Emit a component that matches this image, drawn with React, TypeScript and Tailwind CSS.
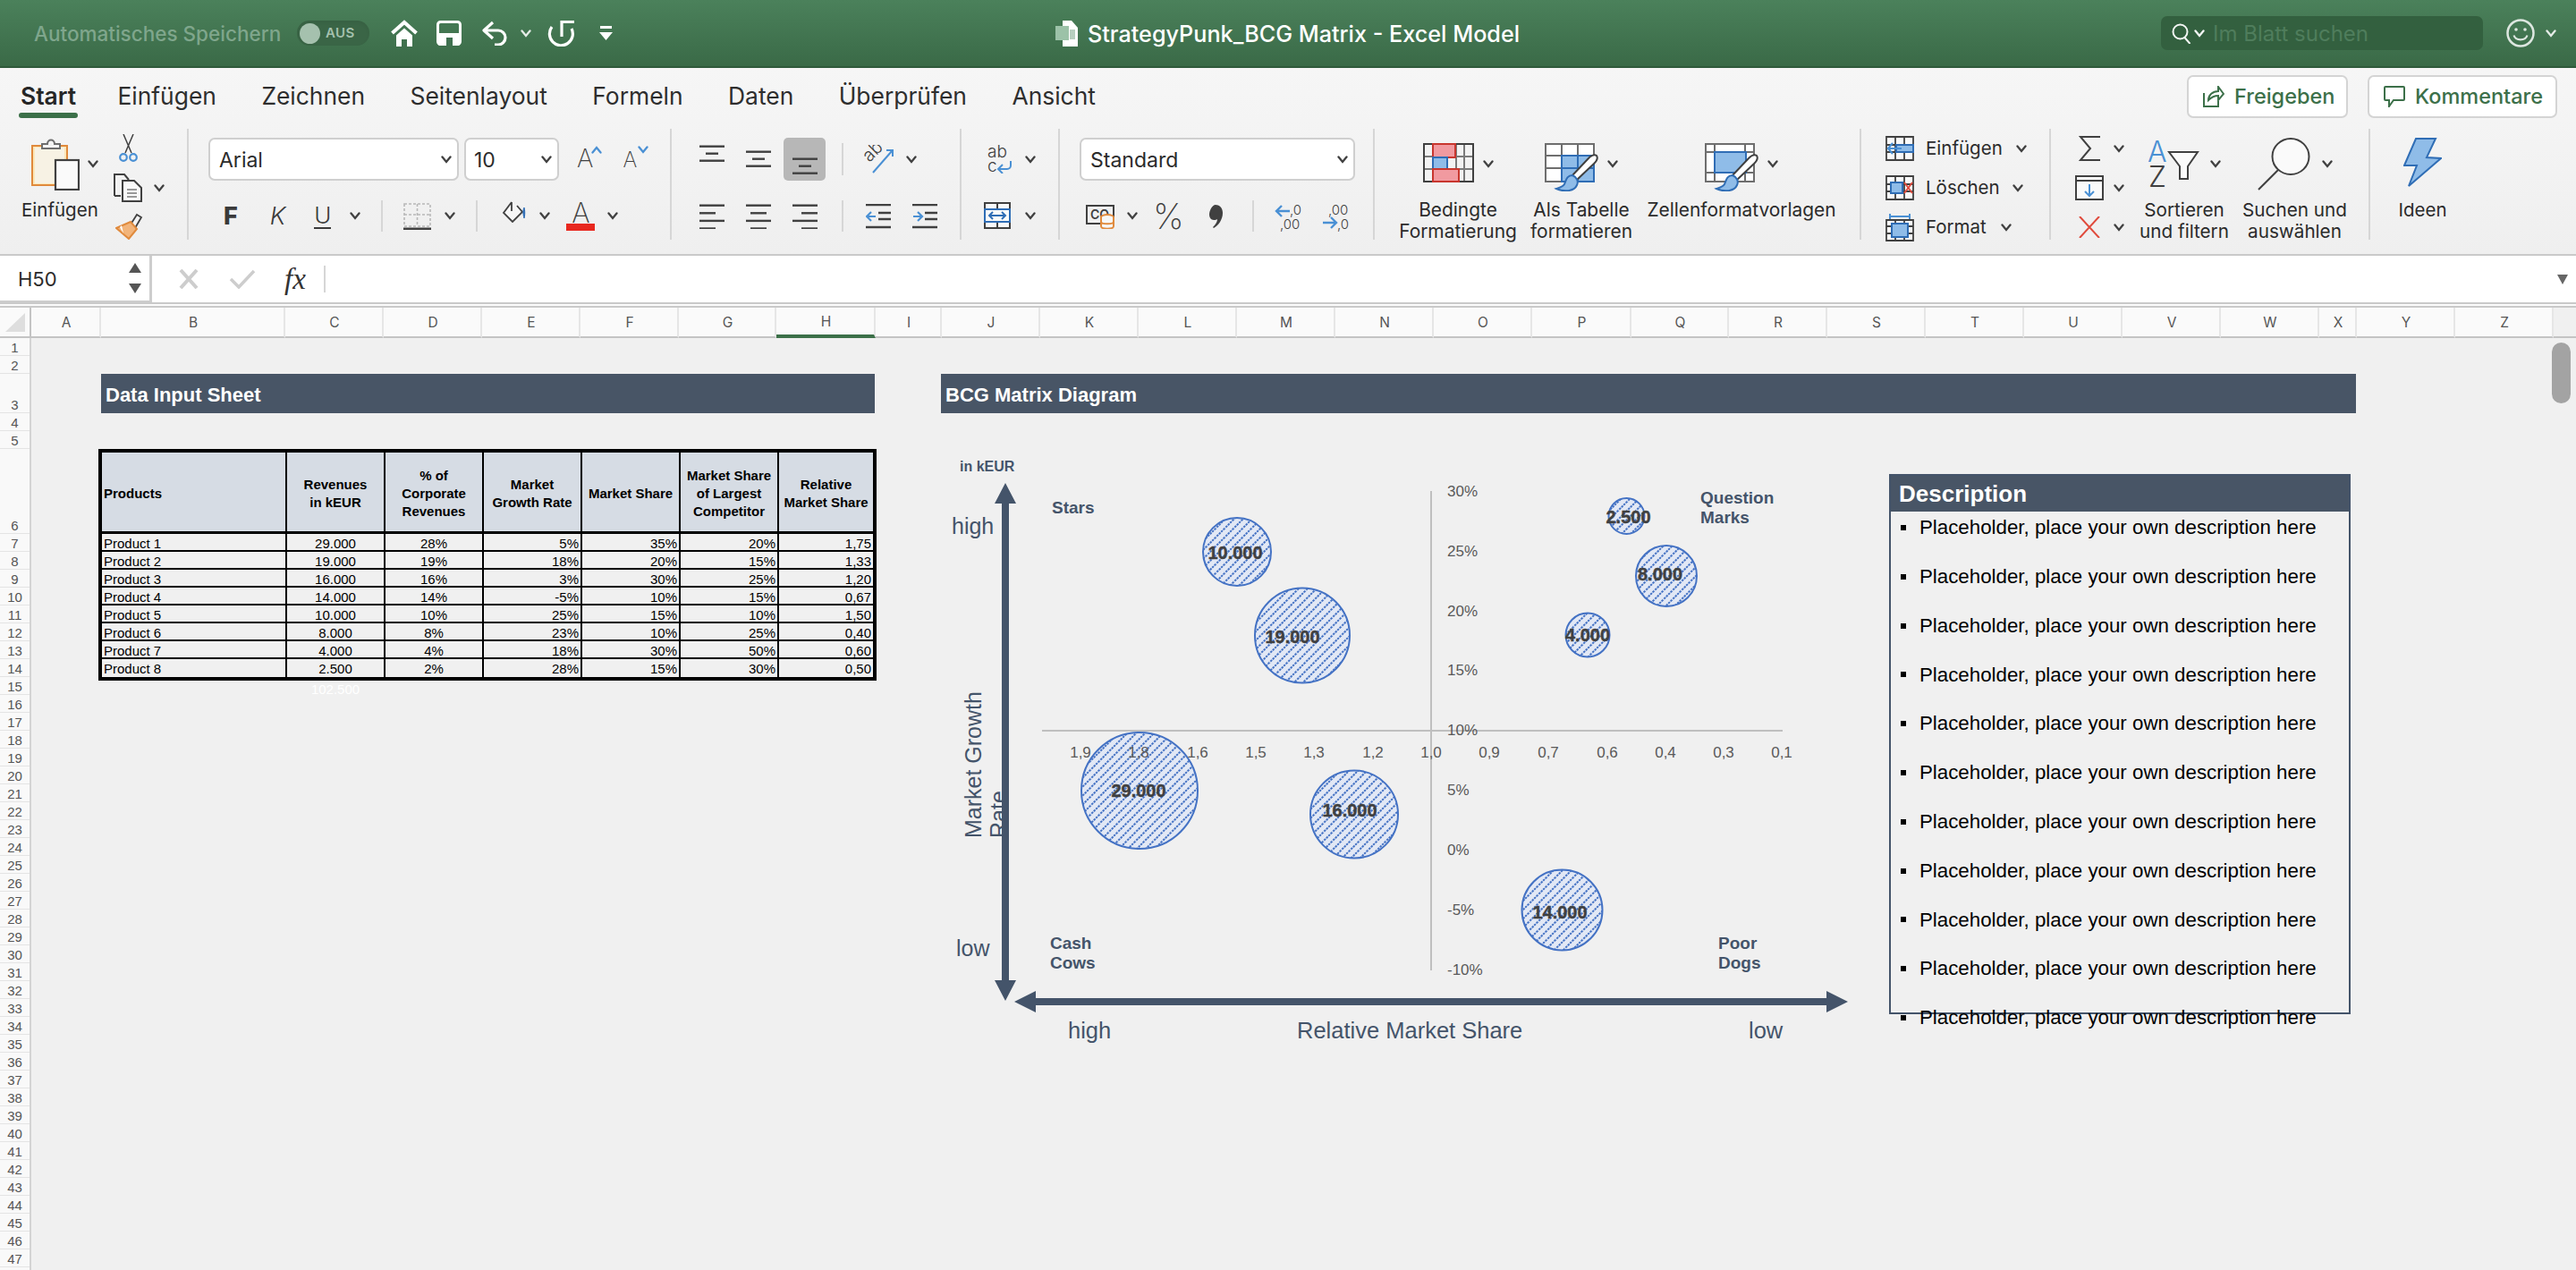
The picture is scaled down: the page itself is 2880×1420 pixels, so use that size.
const UI = "font-['Inter','Liberation_Sans',sans-serif]"

const COLUMNS = [
  { n: 'A', w: 'w-[78px]' }, { n: 'B', w: 'w-[206px]' }, { n: 'C', w: 'w-[110px]' }, { n: 'D', w: 'w-[110px]' },
  { n: 'E', w: 'w-[110px]' }, { n: 'F', w: 'w-[110px]' }, { n: 'G', w: 'w-[109px]' }, { n: 'H', w: 'w-[111px]' },
  { n: 'I', w: 'w-[74px]' }, { n: 'J', w: 'w-[110px]' }, { n: 'K', w: 'w-[110px]' }, { n: 'L', w: 'w-[110px]' },
  { n: 'M', w: 'w-[110px]' }, { n: 'N', w: 'w-[110px]' }, { n: 'O', w: 'w-[110px]' }, { n: 'P', w: 'w-[111px]' },
  { n: 'Q', w: 'w-[109px]' }, { n: 'R', w: 'w-[110px]' }, { n: 'S', w: 'w-[110px]' }, { n: 'T', w: 'w-[110px]' },
  { n: 'U', w: 'w-[110px]' }, { n: 'V', w: 'w-[110px]' }, { n: 'W', w: 'w-[110px]' }, { n: 'X', w: 'w-[42px]' },
  { n: 'Y', w: 'w-[110px]' }, { n: 'Z', w: 'w-[110px]' },
]

const ROWS = Array.from({ length: 47 }, (_, i) => i + 1)

const PRODUCTS = [
  ['Product 1', '29.000', '28%', '5%', '35%', '20%', '1,75'],
  ['Product 2', '19.000', '19%', '18%', '20%', '15%', '1,33'],
  ['Product 3', '16.000', '16%', '3%', '30%', '25%', '1,20'],
  ['Product 4', '14.000', '14%', '-5%', '10%', '15%', '0,67'],
  ['Product 5', '10.000', '10%', '25%', '15%', '10%', '1,50'],
  ['Product 6', '8.000', '8%', '23%', '10%', '25%', '0,40'],
  ['Product 7', '4.000', '4%', '18%', '30%', '50%', '0,60'],
  ['Product 8', '2.500', '2%', '28%', '15%', '30%', '0,50'],
]

const BUBBLES = [
  { cx: 1383, cy: 617, r: 38, tx: 1381, ty: 618, label: '10.000' },
  { cx: 1456, cy: 710.5, r: 53, tx: 1445, ty: 712, label: '19.000' },
  { cx: 1274, cy: 884, r: 65, tx: 1273, ty: 884, label: '29.000' },
  { cx: 1514, cy: 910.5, r: 49, tx: 1509, ty: 906, label: '16.000' },
  { cx: 1746.5, cy: 1017.5, r: 45, tx: 1744, ty: 1020, label: '14.000' },
  { cx: 1818.5, cy: 577, r: 20, tx: 1820.5, ty: 578, label: '2.500' },
  { cx: 1863, cy: 644, r: 34, tx: 1856, ty: 642, label: '8.000' },
  { cx: 1775, cy: 710, r: 24.5, tx: 1775, ty: 710, label: '4.000' },
]

const Y_TICKS = [
  ['30%', 549], ['25%', 616], ['20%', 683], ['15%', 749], ['10%', 816],
  ['5%', 883], ['0%', 950], ['-5%', 1017], ['-10%', 1084],
] as const

const X_TICKS = [
  ['1,9', 1208], ['1,8', 1273], ['1,6', 1339], ['1,5', 1404], ['1,3', 1469], ['1,2', 1535], ['1,0', 1600],
  ['0,9', 1665], ['0,7', 1731], ['0,6', 1797], ['0,4', 1862], ['0,3', 1927], ['0,1', 1992],
] as const

const TABS = ['Einfügen', 'Zeichnen', 'Seitenlayout', 'Formeln', 'Daten', 'Überprüfen', 'Ansicht']

function Chev({ className = '', color = '#404040' }: { className?: string; color?: string }) {
  return (
    <svg width="12" height="9" viewBox="0 0 12 9" className={`shrink-0 ${className}`}>
      <path d="M1.5 1.5 6 7l4.5-5.5" fill="none" stroke={color} strokeWidth="2.3" strokeLinecap="round" />
    </svg>
  )
}

function Sep({ className = '' }: { className?: string }) {
  return <div className={`w-[2px] bg-[#d6d6d6] shrink-0 ${className}`} />
}

function SelectBox({ w, label, textMl, className = '' }: { w: string; label: string; textMl: string; className?: string }) {
  return (
    <div className={`${w} ${className} h-[48px] bg-white border-2 border-[#cfcfcf] rounded-[7px] flex items-center shrink-0`}>
      <span className={`${textMl} pt-[2px] text-[23px] text-[#2b2b2b] leading-none`}>{label}</span>
      <Chev className="ml-auto mr-[6px]" />
    </div>
  )
}

function AlignIcon({ rows, className = '' }: { rows: [number, number][]; className?: string }) {
  const step = rows.length === 3 ? 8 : 8.6
  return (
    <svg width="28" height={rows.length === 4 ? 28 : 20} className={`shrink-0 ${className}`}>
      {rows.map(([a, b], i) => (
        <rect key={i} x={a} y={i * step + 0.5} width={b - a} height="2.4" fill="#404040" />
      ))}
    </svg>
  )
}

function BrushOverlay() {
  return (
    <g>
      <path d="M58 14 C55 12 52 14 49 17 L31 36 L36 41 L55 23 C58 20 60 17 58 14Z" fill="#fff" stroke="#404040" strokeWidth="2" />
      <path d="M31 36 C25 36 24 41 22 46 C20 49 16 50 13 51 C22 55 33 54 36 47 C38 43 36 38 31 36Z" fill="#8fbce8" stroke="#2f6db5" strokeWidth="2" />
    </g>
  )
}

function TitleBar() {
  return (
    <div className="h-[76px] bg-gradient-to-b from-[#4b815b] to-[#3a6a47] border-b-2 border-[#2f5a3b] flex items-center">
      <span className="ml-[38px] pt-[2px] w-[280px] text-[22.5px] font-medium text-[#7fa68c] whitespace-nowrap">Automatisches Speichern</span>
      <div className="ml-[14px] w-[81px] h-[28px] rounded-full bg-[#3a6546] flex items-center shadow-inner">
        <div className="ml-[3px] w-[23px] h-[23px] rounded-full bg-[#a5c1ae]" />
        <span className="ml-[6px] text-[15px] font-semibold text-[#a5c1ae] tracking-wide">AUS</span>
      </div>
      <svg width="32" height="30" viewBox="0 0 32 30" className="ml-[23px]">
        <path d="M2.5 15 16 3l13.500 12" fill="none" stroke="#fff" strokeWidth="4" />
        <path d="M7 17.500 16 9.500l9 8V30h-6v-8h-6v8H7Z" fill="#fff" />
      </svg>
      <svg width="28" height="28" viewBox="0 0 28 28" className="ml-[20px]">
        <rect x="1.500" y="1.500" width="25" height="25" rx="3" fill="none" stroke="#fff" strokeWidth="3" />
        <path d="M2 14h24v12a2 2 0 0 1-2 2H4a2 2 0 0 1-2-2Z" fill="#fff" />
        <rect x="11" y="19" width="7" height="9" fill="#3f7150" />
      </svg>
      <svg width="30" height="28" viewBox="0 0 30 28" className="ml-[22px]">
        <path d="M13 2 3 11l10 9M3 11h16a8 8 0 0 1 0 16h-4" fill="none" stroke="#fff" strokeWidth="3.200" strokeLinejoin="round" />
      </svg>
      <Chev className="ml-[14px]" color="#e5ece7" />
      <svg width="32" height="30" viewBox="0 0 32 30" className="ml-[17px]">
        <path d="M6 8a13 13 0 1 0 22 2" fill="none" stroke="#fff" strokeWidth="3.200" />
        <path d="M17 19V2.500h14" fill="none" stroke="#fff" strokeWidth="3.200" />
      </svg>
      <svg width="15" height="16" viewBox="0 0 15 16" className="ml-[27px]">
        <rect x="1" y="0" width="13" height="3" fill="#fff" />
        <path d="M0 7h15l-7.500 9Z" fill="#fff" />
      </svg>

      <svg width="25" height="29" viewBox="0 0 25 29" className="ml-[495px]">
        <path d="M8 0h10l7 8v21H8Z" fill="#fff" />
        <rect x="0" y="6" width="15" height="16" fill="#9cc2a8" />
        <rect x="16" y="10" width="6" height="11" fill="#b7cfbf" />
      </svg>
      <span className="ml-[11px] pt-[3px] text-[25.200px] font-medium text-white whitespace-nowrap w-[486px]">StrategyPunk_BCG Matrix - Excel Model</span>

      <div className="ml-[714px] w-[360px] h-[38px] rounded-[7px] bg-[#33603f] flex items-center">
        <svg width="22" height="23" viewBox="0 0 22 23" className="ml-[12px]">
          <circle cx="9.500" cy="9.500" r="8" fill="none" stroke="#f2f5f3" strokeWidth="2" />
          <path d="m14.500 16 6 7" stroke="#f2f5f3" strokeWidth="2" />
        </svg>
        <Chev className="ml-[3px]" color="#f2f5f3" />
        <span className="ml-[9px] pt-[2px] text-[24px] text-[#4f7d5c] whitespace-nowrap">Im Blatt suchen</span>
      </div>
      <svg width="32" height="32" viewBox="0 0 32 32" className="ml-[26px]">
        <circle cx="16" cy="16" r="14.500" fill="none" stroke="#dde7e0" strokeWidth="2.500" />
        <circle cx="11" cy="12" r="1.800" fill="#dde7e0" />
        <circle cx="21" cy="12" r="1.800" fill="#dde7e0" />
        <path d="M8.500 18.500c2 6.500 13 6.500 15 0" fill="none" stroke="#dde7e0" strokeWidth="2.200" />
      </svg>
      <Chev className="ml-[12px]" color="#e5ece7" />
    </div>
  )
}

function Tabs() {
  return (
    <div className="h-[68px] flex justify-between">
      <div className="flex pl-[21px] pt-[15px] gap-[50.500px]">
        <div className="flex flex-col items-center mr-[-6px]">
          <span className="text-[26.400px] leading-[32px] font-semibold text-[#262626]">Start</span>
          <div className="mt-[3px] w-[66px] h-[6px] rounded-full bg-[#3c7049]" />
        </div>
        {TABS.map((t) => (
          <span key={t} className="text-[26.400px] leading-[32px] text-[#2e2e2e]">{t}</span>
        ))}
      </div>
      <div className="flex pt-[8px] pr-[21px] gap-[22px]">
        <div className="w-[180px] h-[48px] bg-white border-2 border-[#d4d4d4] rounded-[7px] flex items-center">
          <svg width="24" height="24" viewBox="0 0 24 24" className="ml-[16px]">
            <path d="M1 8v15h16v-6M6 16c0-6 5-10 11-10V1l6 8-6 7v-5c-5 0-8 2-11 5Z" fill="none" stroke="#3c7049" strokeWidth="2" />
          </svg>
          <span className="ml-[11px] text-[23.500px] font-medium text-[#3c7049]">Freigeben</span>
        </div>
        <div className="w-[212px] h-[48px] bg-white border-2 border-[#d4d4d4] rounded-[7px] flex items-center">
          <svg width="24" height="24" viewBox="0 0 24 24" className="ml-[16px]">
            <path d="M2 1h20a1 1 0 0 1 1 1v13a1 1 0 0 1-1 1H11l-5 7v-7H2a1 1 0 0 1-1-1V2a1 1 0 0 1 1-1Z" fill="none" stroke="#3c7049" strokeWidth="2" />
          </svg>
          <span className="ml-[11px] text-[23.500px] font-medium text-[#3c7049]">Kommentare</span>
        </div>
      </div>
    </div>
  )
}

function PasteGroup() {
  return (
    <div className="w-[211px] h-[124px] border-r-2 border-[#d6d6d6] flex shrink-0">
      <div className="w-[127px] pl-[24px] pt-[10px] flex flex-col">
        <div className="flex items-center pl-[11px] h-[59px] shrink-0">
          <svg width="54" height="59" viewBox="0 0 54 59">
            <rect x="1" y="9" width="39" height="44" fill="#fbe7b8" stroke="#e08a3c" strokeWidth="2" />
            <rect x="4" y="11" width="33" height="40" fill="#f7f2e4" />
            <path d="M12 12V7h6c0-6 8-6 8 0h6v5Z" fill="#f4f4f4" stroke="#6e6e6e" strokeWidth="2" />
            <rect x="27" y="25" width="26" height="33" fill="#fafafa" stroke="#404040" strokeWidth="2.200" />
          </svg>
          <Chev className="ml-[9px]" />
        </div>
        <span className="mt-[10px] text-[20.500px] leading-[24px] text-[#2b2b2b] whitespace-nowrap">Einfügen</span>
      </div>
      <div className="flex flex-col pt-[6px]">
        <svg width="21" height="32" viewBox="0 0 21 32" className="ml-[6px] shrink-0">
          <path d="M5 0 14 21M16 0 7 21" stroke="#404040" strokeWidth="1.500" fill="none" />
          <circle cx="5" cy="26" r="3.800" fill="none" stroke="#4a90d4" strokeWidth="2.200" />
          <circle cx="16" cy="26" r="3.800" fill="none" stroke="#4a90d4" strokeWidth="2.200" />
        </svg>
        <div className="flex items-center mt-[12px]">
          <svg width="33" height="32" viewBox="0 0 33 32">
            <path d="M1 25V1h11l5 6" fill="none" stroke="#404040" strokeWidth="2" />
            <path d="M1 25h7" stroke="#404040" strokeWidth="2" />
            <path d="M10 8h13l8 8v15H10Z" fill="#fafafa" stroke="#404040" strokeWidth="2" />
            <path d="M15 18h11M15 22h11M15 26h11" stroke="#7a7a7a" strokeWidth="1.500" />
          </svg>
          <Chev className="ml-[12px]" />
        </div>
        <svg width="31" height="30" viewBox="0 0 31 30" className="mt-[12px] ml-[2px] shrink-0">
          <path d="M17 13 24 2l5 3-7 12" fill="#f4f4f4" stroke="#404040" strokeWidth="1.800" />
          <path d="M1 17 17 10l7 8-9 11Z" fill="#f2b47a" stroke="#e08a3c" strokeWidth="2" />
          <path d="M5 16l4 7-2-9" fill="#fff" />
        </svg>
      </div>
    </div>
  )
}

function FontGroup() {
  return (
    <div className="w-[540px] h-[124px] border-r-2 border-[#d6d6d6] flex flex-col shrink-0">
      <div className="flex mt-[10px] h-[48px] ml-[22px]">
        <SelectBox w="w-[280px]" label="Arial" textMl="ml-[10px]" />
        <SelectBox w="w-[106px]" className="ml-[6px]" label="10" textMl="ml-[9px]" />
        <div className="ml-[20px] mt-[9px] flex">
          <span className="text-[28px] font-extralight leading-[28px] text-[#404040]">A</span>
          <Chev className="ml-[-2px] rotate-180" color="#4a90d4" />
          <span className="ml-[23px] mt-[4px] text-[24px] font-extralight leading-[24px] text-[#404040]">A</span>
          <Chev className="ml-[1px]" color="#4a90d4" />
        </div>
      </div>
      <div className="flex items-center mt-[22px] h-[35px] ml-[39px]">
        <span className="text-[27px] font-extrabold leading-none text-[#3a3a3a]">F</span>
        <span className="ml-[36px] text-[27px] italic font-light leading-none text-[#3a3a3a]">K</span>
        <span className="ml-[32px] text-[26px] font-light leading-[26px] border-b-2 border-[#3a3a3a] text-[#3a3a3a]">U</span>
        <Chev className="ml-[21px]" />
        <Sep className="ml-[23px] h-[35px]" />
        <svg width="31" height="30" viewBox="0 0 31 30" className="ml-[23px] shrink-0">
          <path d="M1 1h29v25H1ZM15.500 1v25M1 13h29" fill="none" stroke="#b8b8b8" strokeWidth="1.600" strokeDasharray="3 2" />
          <rect x="0" y="27.500" width="31" height="2.500" fill="#404040" />
        </svg>
        <Chev className="ml-[15px]" />
        <Sep className="ml-[23px] h-[35px]" />
        <svg width="27" height="24" viewBox="0 0 27 24" className="ml-[27px] mb-[9px] shrink-0">
          <path d="M11 1 2 13l10 10 11-11-6-7M11 1v10" fill="#f7f7f7" stroke="#404040" strokeWidth="1.800" />
          <path d="M25 7c1 4 1 8 0 12-1-4-2-8 0-12Z" fill="#2f6db5" stroke="#2f6db5" />
        </svg>
        <Chev className="ml-[15px]" />
        <div className="ml-[18px] w-[32px] flex flex-col items-center">
          <span className="text-[31px] font-extralight leading-[25px] text-[#404040]">A</span>
          <div className="w-[32px] h-[8px] bg-[#e8281f]" />
        </div>
        <Chev className="ml-[14px]" />
      </div>
    </div>
  )
}

function AlignGroup() {
  return (
    <div className="w-[324px] h-[124px] border-r-2 border-[#d6d6d6] flex flex-col shrink-0">
      <div className="flex mt-[10px] h-[48px] ml-[31px]">
        <AlignIcon className="mt-[8px]" rows={[[0, 28], [7, 21], [0, 28]]} />
        <AlignIcon className="ml-[24px] mt-[14px]" rows={[[0, 28], [7, 21], [0, 28]]} />
        <div className="ml-[14px] w-[47px] h-[48px] bg-[#b7b7b7] rounded-[5px] shrink-0 flex justify-center pt-[22px]">
          <AlignIcon rows={[[0, 28], [7, 21], [0, 28]]} />
        </div>
        <Sep className="ml-[18px] mt-[6px] h-[36px]" />
        <svg width="33" height="32" viewBox="0 0 33 32" className="ml-[23px] mt-[8px] shrink-0">
          <text x="6" y="20" transform="rotate(-45 6 20)" fontSize="20" fill="#404040" fontWeight="300">ab</text>
          <path d="M10 31 31 7M25 6h7v7" fill="none" stroke="#4a90d4" strokeWidth="2" />
        </svg>
        <Chev className="ml-[14px] mt-[20px]" />
      </div>
      <div className="flex mt-[26px] h-[30px] ml-[31px]">
        <AlignIcon rows={[[0, 28], [0, 18], [0, 28], [0, 18]]} />
        <AlignIcon className="ml-[24px]" rows={[[0, 28], [5, 23], [0, 28], [5, 23]]} />
        <AlignIcon className="ml-[24px]" rows={[[0, 28], [10, 28], [0, 28], [10, 28]]} />
        <Sep className="ml-[27px] mt-[-4px] h-[35px]" />
        <svg width="28" height="28" viewBox="0 0 28 28" className="ml-[25px] shrink-0">
          <path d="M0 1h28M14 10h14M14 17h14M0 26h28" stroke="#404040" strokeWidth="2.400" />
          <path d="M11 14H1M6 9l-5 5 5 5" fill="none" stroke="#4a90d4" strokeWidth="2.200" />
        </svg>
        <svg width="28" height="28" viewBox="0 0 28 28" className="ml-[24px] shrink-0">
          <path d="M0 1h28M14 10h14M14 17h14M0 26h28" stroke="#404040" strokeWidth="2.400" />
          <path d="M1 14h10M6 9l5 5-5 5" fill="none" stroke="#4a90d4" strokeWidth="2.200" />
        </svg>
      </div>
    </div>
  )
}

function WrapGroup() {
  return (
    <div className="w-[110px] h-[124px] border-r-2 border-[#d6d6d6] flex flex-col shrink-0">
      <div className="flex items-center ml-[29px] mt-[18px] h-[32px]">
        <svg width="30" height="32" viewBox="0 0 30 32">
          <text x="0" y="14" fontSize="19" fill="#404040" fontWeight="300">ab</text>
          <text x="0" y="30" fontSize="19" fill="#404040" fontWeight="300">c</text>
          <path d="M26 18v5a4 4 0 0 1-4 4H12M17 22l-5 5 5 5" fill="none" stroke="#4a90d4" strokeWidth="2" />
        </svg>
        <Chev className="ml-[12px]" />
      </div>
      <div className="flex items-center ml-[25px] mt-[32px] h-[30px]">
        <svg width="30" height="30" viewBox="0 0 30 30">
          <path d="M1 1h28v28H1ZM15 1v6M15 23v6" fill="#fafafa" stroke="#404040" strokeWidth="2" />
          <rect x="1" y="8" width="28" height="14" fill="#fafafa" stroke="#2f6db5" strokeWidth="2" />
          <path d="M6 15h18M10 11l-4 4 4 4M20 11l4 4-4 4" fill="none" stroke="#2f6db5" strokeWidth="2" />
        </svg>
        <Chev className="ml-[16px]" />
      </div>
    </div>
  )
}

function NumberGroup() {
  return (
    <div className="w-[352px] h-[124px] border-r-2 border-[#d6d6d6] flex flex-col shrink-0">
      <div className="mt-[10px] ml-[22px]">
        <SelectBox w="w-[308px]" label="Standard" textMl="ml-[10px]" />
      </div>
      <div className="flex items-center mt-[22px] h-[35px] ml-[29px]">
        <svg width="33" height="28" viewBox="0 0 33 28" className="shrink-0">
          <path d="M1 2h30v20H1Z" fill="none" stroke="#404040" strokeWidth="2" />
          <text x="5" y="17" fontSize="14" fontWeight="600" fill="#404040">CO</text>
          <ellipse cx="24" cy="15" rx="7" ry="3" fill="#f7f7f7" stroke="#e08a3c" strokeWidth="2" />
          <path d="M17 15v10c0 3.500 14 3.500 14 0V15M17 20c0 3 14 3 14 0" fill="#f7f7f7" stroke="#e08a3c" strokeWidth="2" />
        </svg>
        <Chev className="ml-[13px]" />
        <span className="ml-[17px] text-[39px] font-extralight leading-none text-[#404040]">%</span>
        <svg width="16" height="28" viewBox="0 0 16 28" className="ml-[28px] shrink-0">
          <path d="M7 1c4 0 8 3 8 9 0 8-5 14-10 17l-1-1c3-3 5-6 5-9-1 .6-2 1-4 1-3 0-5-3-5-6 0-4 3-11 7-11Z" fill="#404040" />
        </svg>
        <Sep className="ml-[32px] h-[35px]" />
        <svg width="32" height="30" viewBox="0 0 32 30" className="ml-[23px] shrink-0 overflow-visible">
          <path d="M17 9H2M8 3 2 9l6 6" fill="none" stroke="#4a90d4" strokeWidth="2.400" />
          <text x="17" y="13" fontSize="15" fontWeight="300" fill="#404040">,0</text>
          <text x="6" y="29" fontSize="15" fontWeight="300" fill="#404040">,00</text>
        </svg>
        <svg width="32" height="30" viewBox="0 0 32 30" className="ml-[21px] shrink-0 overflow-visible">
          <text x="7" y="13" fontSize="15" fontWeight="300" fill="#404040">,00</text>
          <path d="M1 22h15M10 16l6 6-6 6" fill="none" stroke="#4a90d4" strokeWidth="2.400" />
          <text x="17" y="29" fontSize="15" fontWeight="300" fill="#404040">,0</text>
        </svg>
      </div>
    </div>
  )
}

function StyleColumn({ icon, lines, className, w }: { icon: React.ReactNode; lines: string[]; className: string; w: string }) {
  return (
    <div className={`${className} ${w} flex flex-col items-center shrink-0`}>
      <div className="h-[54px] flex items-start mt-[16px] shrink-0">
        {icon}
        <Chev className="mt-[19px] ml-[10px]" />
      </div>
      <div className="mt-[9px] text-center text-[20.900px] leading-[24px] text-[#2b2b2b] whitespace-nowrap">
        {lines.map((l) => <div key={l}>{l}</div>)}
      </div>
    </div>
  )
}

function StylesGroup() {
  return (
    <div className="w-[544px] h-[124px] border-r-2 border-[#d6d6d6] flex shrink-0">
      <StyleColumn
        className="ml-[24px]" w="w-[138px]" lines={['Bedingte', 'Formatierung']}
        icon={
          <svg width="57" height="54" viewBox="0 0 57 54">
            <path d="M37 1v42M46 1v42M1 15h55M1 29h55" stroke="#7a7a7a" strokeWidth="2" fill="#fff" />
            <rect x="1" y="1" width="55" height="42" fill="none" stroke="#404040" strokeWidth="2" />
            <rect x="11" y="1" width="25" height="15" fill="#f19aa0" stroke="#c8362e" strokeWidth="2" />
            <rect x="11" y="16" width="16" height="13" fill="#8fbce8" stroke="#2f6db5" strokeWidth="2" />
            <rect x="11" y="29" width="29" height="14" fill="#f19aa0" stroke="#c8362e" strokeWidth="2" />
          </svg>
        }
      />
      <StyleColumn
        className="" w="w-[138px]" lines={['Als Tabelle', 'formatieren']}
        icon={
          <svg width="60" height="54" viewBox="0 0 60 54">
            <path d="M1 1h54v42H1ZM19 1v42M37 1v42M1 14h54M1 28h54" fill="#fff" stroke="#6e6e6e" strokeWidth="2" />
            <rect x="19" y="14" width="36" height="29" fill="#8fbce8" stroke="#2f6db5" strokeWidth="2" />
            <path d="M19 28h36M37 14v29" stroke="#2f6db5" strokeWidth="2" />
            <BrushOverlay />
          </svg>
        }
      />
      <StyleColumn
        className="ml-[3px]" w="w-[214px]" lines={['Zellenformatvorlagen']}
        icon={
          <svg width="60" height="54" viewBox="0 0 60 54">
            <path d="M1 1h54v42H1ZM11 1v42M45 1v42M1 10h54M1 33h54" fill="#fff" stroke="#6e6e6e" strokeWidth="2" />
            <rect x="11" y="10" width="35" height="23" fill="#8fbce8" stroke="#2f6db5" strokeWidth="2" />
            <BrushOverlay />
          </svg>
        }
      />
    </div>
  )
}

function CellsGroup() {
  return (
    <div className="w-[212px] h-[124px] border-r-2 border-[#d6d6d6] flex flex-col pl-[27px] pt-[8px] shrink-0">
      <div className="flex items-center h-[28px]">
        <svg width="32" height="28" viewBox="0 0 32 28">
          <path d="M1 1h30v26H1ZM11 1v26M21 1v26M1 10h30M1 18h30" fill="#fafafa" stroke="#404040" strokeWidth="1.800" />
          <rect x="12" y="10" width="19" height="8" fill="#8fbce8" stroke="#2f6db5" strokeWidth="2" />
          <path d="M18 14H3M8 8l-5 6 5 6" fill="none" stroke="#4a90d4" strokeWidth="2.200" />
        </svg>
        <span className="ml-[13px] w-[86px] text-[20.500px] text-[#2b2b2b] whitespace-nowrap">Einfügen</span>
        <Chev className="ml-[15px]" />
      </div>
      <div className="flex items-center h-[28px] mt-[16px]">
        <svg width="32" height="28" viewBox="0 0 32 28">
          <path d="M1 1h30v26H1ZM11 1v26M21 1v26M1 10h30M1 18h30" fill="#fafafa" stroke="#404040" strokeWidth="1.800" />
          <rect x="6" y="8" width="13" height="12" fill="#8fbce8" stroke="#2f6db5" strokeWidth="2" />
          <path d="M21 8l9 12M30 8l-9 12" stroke="#e04a3c" strokeWidth="2" />
        </svg>
        <span className="ml-[13px] w-[83px] text-[20.500px] text-[#2b2b2b] whitespace-nowrap">Löschen</span>
        <Chev className="ml-[14px]" />
      </div>
      <div className="flex items-center h-[31px] mt-[15px]">
        <svg width="32" height="31" viewBox="0 0 32 31">
          <path d="M1 7h30v23H1ZM11 7v23M21 7v23M1 14h30M1 22h30" fill="#fafafa" stroke="#404040" strokeWidth="1.800" />
          <rect x="7" y="11" width="18" height="15" fill="#8fbce8" stroke="#2f6db5" strokeWidth="2" />
          <path d="M5 3h22M5 0v6M27 0v6" stroke="#4a90d4" strokeWidth="2" fill="none" />
        </svg>
        <span className="ml-[13px] w-[69px] text-[20.500px] text-[#2b2b2b] whitespace-nowrap">Format</span>
        <Chev className="ml-[15px]" />
      </div>
    </div>
  )
}

function EditGroup() {
  return (
    <div className="w-[357px] h-[124px] border-r-2 border-[#d6d6d6] flex shrink-0">
      <div className="ml-[27px] w-[56px] flex flex-col pt-[8px] shrink-0">
        <div className="flex items-center h-[28px]">
          <svg width="32" height="28" viewBox="0 0 32 28">
            <path d="M28 1H6l11 13L6 27h22" fill="none" stroke="#404040" strokeWidth="2" />
          </svg>
          <Chev className="ml-[11px]" />
        </div>
        <div className="flex items-center h-[28px] mt-[16px]">
          <svg width="32" height="28" viewBox="0 0 32 28">
            <rect x="1" y="1" width="30" height="26" fill="#fafafa" stroke="#404040" strokeWidth="2" />
            <path d="M1 6h30" stroke="#404040" strokeWidth="2" />
            <path d="M16 10v13M11 18l5 5 5-5" fill="none" stroke="#4a90d4" strokeWidth="2" />
          </svg>
          <Chev className="ml-[11px]" />
        </div>
        <div className="flex items-center h-[24px] mt-[18px]">
          <svg width="32" height="24" viewBox="0 0 32 24">
            <path d="M5 0l22 24M27 0 5 24" stroke="#e04a3c" strokeWidth="2" />
          </svg>
          <Chev className="ml-[11px]" />
        </div>
      </div>
      <div className="ml-[14px] w-[104px] flex flex-col items-center shrink-0">
        <div className="h-[59px] mt-[10px] flex items-start shrink-0">
          <svg width="58" height="54" viewBox="0 0 58 54" className="mt-[2px]">
            <text x="0" y="25" fontSize="32" fontWeight="300" fill="#4a90d4">A</text>
            <text x="1" y="53" fontSize="32" fontWeight="300" fill="#404040">Z</text>
            <path d="M24 14h32L45 30v14h-9V30Z" fill="#fafafa" stroke="#404040" strokeWidth="2" />
          </svg>
          <Chev className="mt-[25px] ml-[12px]" />
        </div>
        <div className="mt-[10px] text-center text-[20.700px] leading-[24px] text-[#2b2b2b] whitespace-nowrap">
          <div>Sortieren</div>
          <div>und filtern</div>
        </div>
      </div>
      <div className="ml-[13px] w-[117px] flex flex-col items-center shrink-0">
        <div className="h-[59px] mt-[10px] flex items-start shrink-0">
          <svg width="60" height="59" viewBox="0 0 60 59">
            <ellipse cx="37" cy="21" rx="20.500" ry="20" fill="#fafafa" stroke="#404040" strokeWidth="2" />
            <path d="M23 36 1 58" stroke="#404040" strokeWidth="2" />
          </svg>
          <Chev className="mt-[25px] ml-[12px]" />
        </div>
        <div className="mt-[10px] text-center text-[20.700px] leading-[24px] text-[#2b2b2b] whitespace-nowrap">
          <div>Suchen und</div>
          <div>auswählen</div>
        </div>
      </div>
    </div>
  )
}

function IdeasGroup() {
  return (
    <div className="w-[117px] h-[124px] flex flex-col items-center pt-[10px] shrink-0">
      <svg width="43" height="56" viewBox="0 0 43 56" className="shrink-0">
        <path d="M14 1h22L26 22l16 1L6 54l9-23H1Z" fill="#8fbce8" stroke="#2f6db5" strokeWidth="2" />
      </svg>
      <span className="mt-[13px] text-[20.500px] leading-[24px] text-[#2b2b2b]">Ideen</span>
    </div>
  )
}

function Ribbon() {
  return (
    <div className="h-[208px] bg-gradient-to-b from-[#f6f6f6] to-[#efefef]">
      <Tabs />
      <div className="flex">
        <PasteGroup />
        <FontGroup />
        <AlignGroup />
        <WrapGroup />
        <NumberGroup />
        <StylesGroup />
        <CellsGroup />
        <EditGroup />
        <IdeasGroup />
      </div>
    </div>
  )
}

function FormulaBar() {
  return (
    <div className="h-[60px] flex flex-col">
      <div className="h-[2px] bg-[#c9c9c9]" />
      <div className="h-[52px] bg-white flex items-center">
        <div className="w-[170px] h-[52px] border-r-[3px] border-b-2 border-[#cdcdcd] flex items-center">
          <span className="ml-[20px] pt-[2px] w-[124px] text-[22px] text-[#2b2b2b]">H50</span>
          <svg width="14" height="34" viewBox="0 0 14 34">
            <path d="M7 0l7 11H0ZM0 23h14L7 34Z" fill="#555" />
          </svg>
        </div>
        <svg width="22" height="22" viewBox="0 0 22 22" className="ml-[30px]">
          <path d="M2 1l18 20M20 1 2 21" stroke="#cdcdcd" strokeWidth="4" />
        </svg>
        <svg width="30" height="22" viewBox="0 0 30 22" className="ml-[34px]">
          <path d="M2 11l9 9L28 2" fill="none" stroke="#cdcdcd" strokeWidth="3.500" />
        </svg>
        <span className="ml-[32px] w-[30px] text-[33px] italic font-['Liberation_Serif',serif] text-[#333] leading-none whitespace-nowrap">fx</span>
        <Sep className="ml-[14px] h-[30px]" />
        <svg width="12" height="11" viewBox="0 0 12 11" className="ml-auto mr-[9px]">
          <path d="M0 0h12L6 11Z" fill="#666" />
        </svg>
      </div>
      <div className="h-[6px] bg-[#fafafa] border-y-2 border-[#c9c9c9]" />
    </div>
  )
}

function ColumnHeaders() {
  return (
    <div className="h-[34px] flex bg-[#fafafa]">
      <div className="w-[35px] h-[34px] border-r-2 border-b-2 border-[#c4c4c4] flex items-center justify-center shrink-0">
        <svg width="22" height="21" viewBox="0 0 22 21">
          <path d="M22 0v21H0Z" fill="#dedede" />
        </svg>
      </div>
      {COLUMNS.map((c) => (
        <div
          key={c.n}
          className={`${c.w} h-[34px] shrink-0 flex items-center justify-center pl-[2px] pt-[2px] border-r-2 border-[#e6e6e6] text-[15.500px] text-[#555] ${c.n === 'H' ? 'border-b-4 border-b-[#3c7049]' : 'border-b-2 border-b-[#c4c4c4]'}`}
        >
          {c.n}
        </div>
      ))}
      <div className="flex-1 border-b-2 border-b-[#c4c4c4] bg-[#f0f0f0]" />
    </div>
  )
}

function RowHeaders() {
  return (
    <div className="w-[35px] shrink-0 border-r-2 border-[#d4d4d4] bg-[#f9f9f9]">
      {ROWS.map((r) => (
        <div
          key={r}
          className={`${r === 3 ? 'h-[44px]' : r === 6 ? 'h-[95px]' : 'h-[20px]'} flex items-end justify-center border-b border-[#e4e4e4] text-[15px] leading-[17px] text-[#555]`}
        >
          {r}
        </div>
      ))}
    </div>
  )
}

function SectionBar({ title, w }: { title: string; w: string }) {
  return (
    <div className={`${w} h-[44px] bg-[#485566] flex items-center pl-[5px] pt-[2px] text-[22px] font-bold text-white`}>
      {title}
    </div>
  )
}

function DataTable() {
  const headers = ['Products', 'Revenues\nin kEUR', '% of\nCorporate\nRevenues', 'Market\nGrowth Rate', 'Market Share', 'Market Share\nof Largest\nCompetitor', 'Relative\nMarket Share']
  return (
    <div className="mt-[40px] ml-[-3px] w-[870px] border-4 border-black grid grid-cols-[205px_110px_110px_110px_110px_110px_107px] text-[15px] text-black">
      {headers.map((h, i) => (
        <div
          key={h}
          className={`h-[85px] pt-[3px] bg-[#d6dce4] border-b-[3px] border-black box-content flex items-center font-bold leading-[20px] whitespace-pre-line ${i === 0 ? 'pl-[2px]' : 'border-l-2 justify-center text-center'}`}
        >
          {h}
        </div>
      ))}
      {PRODUCTS.map((row, r) =>
        row.map((v, i) => (
          <div
            key={`${r}-${i}`}
            className={`h-[20px] leading-[21px] whitespace-nowrap ${r < 7 ? 'border-b-2 border-black' : ''} ${i > 0 ? 'border-l-2 border-black' : ''} ${i === 0 ? 'pl-[2px]' : i < 3 ? 'text-center' : 'text-right pr-[2px]'}`}
          >
            {v}
          </div>
        )),
      )}
    </div>
  )
}

function BcgChart() {
  return (
    <svg width="1060" height="720" viewBox="1052 462 1060 720" className="shrink-0">
      <defs>
        <pattern id="hatch" patternUnits="userSpaceOnUse" width="10" height="10">
          <rect width="10" height="10" fill="#e2e8f5" />
          <path d="M-2 12 12 -2M-2 2 2 -2M8 12 12 8" stroke="#4472c4" strokeWidth="2" strokeDasharray="2.400 1" />
        </pattern>
      </defs>

      <text x="1073" y="527" fontSize="16" fontWeight="700" fill="#44546a">in kEUR</text>
      <text x="1064" y="597" fontSize="25" fill="#44546a">high</text>
      <text x="1069" y="1069" fontSize="25" fill="#44546a">low</text>
      <text transform="rotate(-90 1097 937)" x="1097" y="937" fontSize="25" fill="#44546a">Market Growth</text>
      <text transform="rotate(-90 1125 937)" x="1125" y="937" fontSize="25" fill="#44546a">Rate</text>

      <path d="M1120 563h8v533h-8Z" fill="#44546a" />
      <path d="M1124 540l12 23h-24ZM1124 1119l12-23h-24Z" fill="#44546a" />
      <path d="M1158 1116h884v8h-884Z" fill="#44546a" />
      <path d="M1134 1120l24-12v24ZM2066 1120l-24-12v24Z" fill="#44546a" />

      <line x1="1600" y1="549" x2="1600" y2="1085" stroke="#bfbfbf" strokeWidth="2" />
      <line x1="1165" y1="817" x2="1993" y2="817" stroke="#bfbfbf" strokeWidth="2" />

      {Y_TICKS.map(([t, y]) => (
        <text key={t} x="1618" y={y + 6} fontSize="17" fill="#595959">{t}</text>
      ))}

      {BUBBLES.map((b) => (
        <circle key={b.label} cx={b.cx} cy={b.cy} r={b.r} fill="url(#hatch)" stroke="#4472c4" strokeWidth="2" />
      ))}
      {X_TICKS.map(([t, x]) => (
        <text key={t} x={x} y="847" fontSize="17" fill="#595959" textAnchor="middle">{t}</text>
      ))}
      {BUBBLES.map((b) => (
        <text key={b.label} x={b.tx} y={b.ty + 7} fontSize="20" fontWeight="700" fill="#404040" stroke="#404040" strokeWidth="0.4" textAnchor="middle">{b.label}</text>
      ))}

      <text x="1176" y="574" fontSize="19" fontWeight="700" fill="#44546a">Stars</text>
      <text x="1901" y="563" fontSize="19" fontWeight="700" fill="#44546a">Question</text>
      <text x="1901" y="585" fontSize="19" fontWeight="700" fill="#44546a">Marks</text>
      <text x="1174" y="1061" fontSize="19" fontWeight="700" fill="#44546a">Cash</text>
      <text x="1174" y="1083" fontSize="19" fontWeight="700" fill="#44546a">Cows</text>
      <text x="1921" y="1061" fontSize="19" fontWeight="700" fill="#44546a">Poor</text>
      <text x="1921" y="1083" fontSize="19" fontWeight="700" fill="#44546a">Dogs</text>

      <text x="1194" y="1161" fontSize="25.500" fill="#44546a">high</text>
      <text x="1450" y="1161" fontSize="25.500" fill="#44546a">Relative Market Share</text>
      <text x="1955" y="1161" fontSize="25.500" fill="#44546a">low</text>
    </svg>
  )
}

function DescriptionBox() {
  return (
    <div className="mt-[68px] w-[516px] h-[604px] border-2 border-[#44546a] shrink-0">
      <div className="h-[40px] bg-[#485566] flex items-center pl-[9px] text-[26px] font-bold text-white">Description</div>
      <div className="pt-[3px] pl-[11px] flex flex-col gap-[24.800px]">
        {Array.from({ length: 11 }, (_, i) => (
          <div key={i} className="h-[30px] flex items-center text-[22.300px] text-black whitespace-nowrap">
            <div className="w-[6px] h-[6px] bg-black" />
            <span className="ml-[15px]">Placeholder, place your own description here</span>
          </div>
        ))}
      </div>
    </div>
  )
}

function Sheet() {
  return (
    <div className="relative flex-1 flex bg-[#f0f0f0] overflow-hidden font-['Liberation_Sans',sans-serif]">
      <RowHeaders />
      <div className="ml-[78px] w-[866px] pt-[40px] shrink-0">
        <SectionBar title="Data Input Sheet" w="w-[865px]" />
        <DataTable />
        <div className="ml-[207px] w-[110px] text-center text-[15px] leading-[20px] text-white">102.500</div>
      </div>
      <div className="ml-[73px] w-[1582px] pt-[40px] shrink-0">
        <SectionBar title="BCG Matrix Diagram" w="w-[1582px]" />
        <div className="flex items-start">
          <BcgChart />
          <DescriptionBox />
        </div>
      </div>
      <div className="absolute right-[6px] top-[5px] w-[21px] h-[68px] rounded-full bg-[#a3a3a3]" />
    </div>
  )
}

export default function App() {
  return (
    <div className={`w-[2880px] h-[1420px] overflow-hidden flex flex-col bg-[#f0f0f0] ${UI}`}>
      <TitleBar />
      <Ribbon />
      <FormulaBar />
      <ColumnHeaders />
      <Sheet />
    </div>
  )
}
